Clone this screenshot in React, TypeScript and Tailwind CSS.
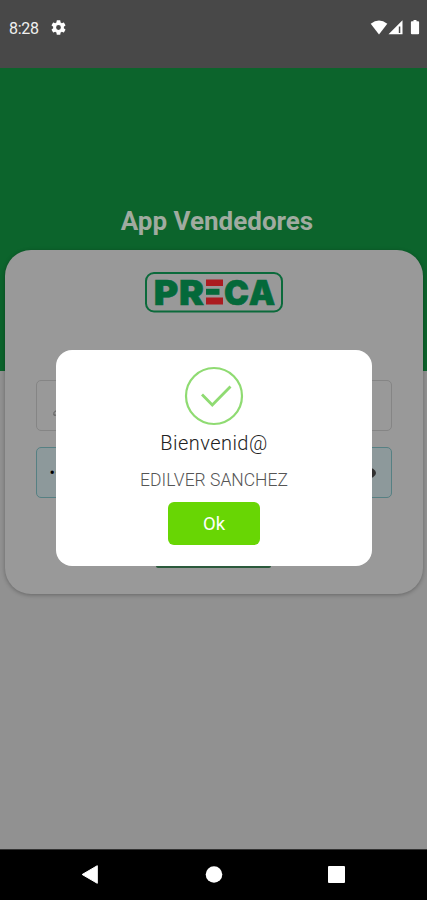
import { useState } from "react";

function StatusBar() {
  return (
    <div className="flex h-[68px] shrink-0 items-start justify-between bg-[#484848] pt-[18px] pr-[7px] pl-[9px] text-white">
      <div className="flex items-center gap-[11px]">
        <span className="w-[31px] text-[16px] leading-[21px] tracking-[-0.3px] whitespace-nowrap text-[#f0f0f0]">8:28</span>
        <svg viewBox="2 2 20 20" className="-mt-0.5 h-[15px] w-[15px] fill-white">
          <path d="M19.14 12.94c.04-.3.06-.61.06-.94s-.02-.64-.07-.94l2.03-1.58a.49.49 0 0 0 .12-.61l-1.92-3.32a.49.49 0 0 0-.59-.22l-2.39.96a7 7 0 0 0-1.62-.94l-.36-2.54a.48.48 0 0 0-.48-.41h-3.84a.48.48 0 0 0-.47.41l-.36 2.54a7.4 7.4 0 0 0-1.62.94l-2.39-.96a.48.48 0 0 0-.59.22L2.74 8.87a.48.48 0 0 0 .12.61l2.03 1.58a6 6 0 0 0 0 1.88l-2.03 1.58a.49.49 0 0 0-.12.61l1.92 3.32c.12.22.37.29.59.22l2.39-.96c.5.38 1.03.7 1.62.94l.36 2.54c.05.24.24.41.48.41h3.84c.24 0 .44-.17.47-.41l.36-2.54a7 7 0 0 0 1.62-.94l2.39.96c.22.08.47 0 .59-.22l1.92-3.32a.48.48 0 0 0-.12-.61zM12 15.2a3.2 3.2 0 1 1 0-6.4 3.2 3.2 0 0 1 0 6.4z" />
        </svg>
      </div>
      <svg viewBox="0 0 50 16" className="mt-[1px] h-[16px] w-[50px] fill-white">
        <path d="M0.7 4.8Q9 -2 17.3 4.8L9 15.5Z" />
        <path d="M32.5 1.2V15.3H18.5Z" />
        <path d="M28.8 7.5h1.5v6.5h-1.5z" className="fill-[#484848]" />
        <path d="M43.5 1h3v1.3h1.6q1 0 1 1v11q0 1-1 1h-6.2q-1 0-1-1v-11q0-1 1-1h1.6z" />
      </svg>
    </div>
  );
}

function Logo() {
  return (
    <svg viewBox="0 0 140 42" className="h-[42px] w-[140px] font-['Inter'] text-[34px] font-black">
      <rect x="2" y="2" width="136" height="38.5" rx="8" className="fill-none stroke-[#0b6a3b]" strokeWidth="2" />
      <text x="61" y="33" textLength="19" lengthAdjust="spacingAndGlyphs" className="fill-[#04693a]">E</text>
      <path d="M60 7h21v28H60z" className="fill-[#999]" />
      <path d="M62 8.5h17v6.5H62zM62 26.5h17v7H62z" className="fill-[#ab1b20]" />
      <path d="M62 17.8h13.5v6H62z" className="fill-[#04693a]" />
      <g className="fill-[#04693a] stroke-[#04693a]" strokeWidth="0.6">
        <text x="9.7" y="33.5" textLength="24.5" lengthAdjust="spacingAndGlyphs">P</text>
        <text x="35" y="33.5" textLength="25" lengthAdjust="spacingAndGlyphs">R</text>
        <text x="80" y="33.5" textLength="25" lengthAdjust="spacingAndGlyphs">C</text>
        <text x="104.7" y="33.5" textLength="26.5" lengthAdjust="spacingAndGlyphs">A</text>
      </g>
    </svg>
  );
}

function LoginCard() {
  return (
    <div className="mx-auto -mt-[121px] flex h-[344px] w-[418px] flex-col items-center rounded-[26px] bg-[#999] pt-[21px] shadow-[0_1px_4px_rgba(0,0,0,0.3)]">
      <Logo />
      <div className="mt-[67px] flex h-[51px] w-[356px] items-center rounded-[5px] border border-[#858585] pl-4">
        <svg viewBox="0 0 12 12" className="mt-3 h-[11px] w-[11px] fill-none stroke-[#555]">
          <path d="M1 10V8q0-3 5-3t5 3v2z" />
        </svg>
      </div>
      <div className="mt-4 flex h-[51px] w-[356px] items-center justify-between rounded-[5px] border-[1.5px] border-[#568083] bg-[#8d999b] pr-[15px] pl-[13px]">
        <span className="text-[16px] text-black">••••••</span>
        <svg viewBox="0 0 20 16" className="h-[16px] w-[20px] fill-[#303030]">
          <ellipse cx="10" cy="8" rx="10" ry="6" />
          <circle cx="10" cy="8" r="3" className="fill-[#8d999b]" />
        </svg>
      </div>
      <div className="mt-[28px] h-[42px] w-[115px] rounded-[2px] bg-[#2b5a3c]" />
    </div>
  );
}

function WelcomeDialog({ name, onClose }: { name: string; onClose: () => void }) {
  return (
    <div className="absolute top-[350px] left-[56px] flex h-[216px] w-[316px] flex-col items-center rounded-[16px] bg-white pt-[16px]">
      <svg viewBox="0 0 60 60" className="h-[60px] w-[60px] fill-none stroke-[#8fdb72]">
        <circle cx="30" cy="30" r="28" strokeWidth="2.2" />
        <path d="M18 28.5L28.3 39L46.5 20.5" strokeWidth="2.8" />
      </svg>
      <h2 className="mt-[4px] text-[20px] leading-[26px] font-light tracking-[0.45px] text-[#222]">
        Bienvenid@
      </h2>
      <p className="mt-[12px] text-[17.5px] leading-[24px] font-light whitespace-nowrap text-[#555]">{name}</p>
      <button
        onClick={onClose}
        className="mt-[10px] h-[43px] w-[92px] cursor-pointer rounded-[6px] bg-[#68d604] pt-[2px] text-[18.5px] text-white"
      >
        Ok
      </button>
    </div>
  );
}

function NavBar() {
  return (
    <div className="h-[51px] shrink-0 border-t border-[#333] bg-black">
      <svg viewBox="0 0 427 50" className="h-[50px] w-full fill-white">
        <path d="M82.2 24.5L97.3 15.7V33.3Z" strokeWidth="1" strokeLinejoin="round" className="stroke-white" />
        <circle cx="214" cy="24.5" r="8.3" />
        <rect x="328" y="16" width="17" height="17" rx="1" />
      </svg>
    </div>
  );
}

export default function App() {
  const [isOpen, setIsOpen] = useState(true);

  return (
    <div className="relative flex h-[900px] w-[427px] flex-col overflow-hidden bg-[#919191] font-['Roboto',sans-serif]">
      <StatusBar />
      <main className="flex-1">
        <header className="h-[303px] bg-[#0c642c] pt-[137px] text-center">
          <h1 className="pl-[7px] text-[26px] leading-[32px] font-bold text-[#a0aba0]">App Vendedores</h1>
        </header>
        <LoginCard />
      </main>
      <NavBar />
      {isOpen && <WelcomeDialog name="EDILVER SANCHEZ" onClose={() => setIsOpen(false)} />}
    </div>
  );
}
